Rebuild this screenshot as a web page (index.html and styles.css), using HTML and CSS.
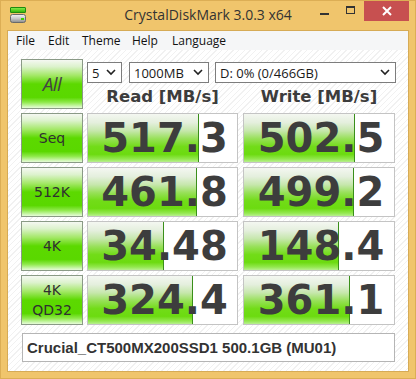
FILE: index.html
```html
<!DOCTYPE html>
<html>
<head>
<meta charset="utf-8">
<link rel="stylesheet" href="styles.css">
</head>
<body>
<div class="window">
  <div class="titlebar">
    <div class="tb-left">
      <svg class="app-icon" width="16" height="16" viewBox="0 0 16 16">
        <defs>
          <linearGradient id="g1" x1="0" y1="0" x2="0" y2="1">
            <stop offset="0" stop-color="#8cf050"/>
            <stop offset="1" stop-color="#2fb000"/>
          </linearGradient>
          <linearGradient id="g2" x1="0" y1="0" x2="0" y2="1">
            <stop offset="0" stop-color="#f4f4f4"/>
            <stop offset="0.5" stop-color="#c8c8c8"/>
            <stop offset="1" stop-color="#8a8a8a"/>
          </linearGradient>
        </defs>
        <rect x="0.5" y="0.5" width="15" height="5" rx="0.5" fill="url(#g1)" stroke="#1f8a10"/>
        <rect x="0.5" y="7.5" width="15" height="8" rx="2" fill="url(#g2)" stroke="#6a6a6a"/>
        <rect x="11" y="11" width="3" height="2" fill="#40d000"/>
      </svg>
    </div>
    <div class="title">CrystalDiskMark 3.0.3 x64</div>
    <div class="tb-right">
      <div class="cb cb-min"><span class="glyph-min"></span></div>
      <div class="cb cb-max"><span class="glyph-max"></span></div>
      <div class="cb cb-close">
        <svg width="10" height="10" viewBox="0 0 10 10"><path d="M1 1 L9 9 M9 1 L1 9" stroke="#fff" stroke-width="2"/></svg>
      </div>
    </div>
  </div>
  <div class="client">
    <div class="menubar">
      <span class="mi mi-file">File</span>
      <span class="mi mi-edit">Edit</span>
      <span class="mi mi-theme">Theme</span>
      <span class="mi mi-help">Help</span>
      <span class="mi mi-lang">Language</span>
    </div>
    <div class="content">
      <div class="toprow">
        <div class="btn btn-all">All</div>
        <div class="controls">
          <div class="combos">
            <div class="combo combo-count"><span>5</span><svg class="chev" width="10" height="7" viewBox="0 0 10 7"><path d="M1 1 L5 5 L9 1" fill="none" stroke="#222" stroke-width="1.6"/></svg></div>
            <div class="combo combo-size"><span>1000MB</span><svg class="chev" width="10" height="7" viewBox="0 0 10 7"><path d="M1 1 L5 5 L9 1" fill="none" stroke="#222" stroke-width="1.6"/></svg></div>
            <div class="combo combo-drive"><span>D: 0% (0/466GB)</span><svg class="chev" width="10" height="7" viewBox="0 0 10 7"><path d="M1 1 L5 5 L9 1" fill="none" stroke="#222" stroke-width="1.6"/></svg></div>
          </div>
          <div class="heads">
            <div class="head head-read">Read [MB/s]</div>
            <div class="head head-write">Write [MB/s]</div>
          </div>
        </div>
      </div>

      <div class="row">
        <div class="btn btn-seq">Seq</div>
        <div class="box box-read"><div class="bar" style="width:110px"></div><span class="val">517.3</span></div>
        <div class="box box-write"><div class="bar" style="width:110px"></div><span class="val">502.5</span></div>
      </div>
      <div class="row">
        <div class="btn btn-small">512K</div>
        <div class="box box-read"><div class="bar" style="width:108px"></div><span class="val">461.8</span></div>
        <div class="box box-write"><div class="bar" style="width:109px"></div><span class="val">499.2</span></div>
      </div>
      <div class="row">
        <div class="btn btn-small">4K</div>
        <div class="box box-read"><div class="bar" style="width:75px"></div><span class="val">34.48</span></div>
        <div class="box box-write"><div class="bar" style="width:94px"></div><span class="val">148.4</span></div>
      </div>
      <div class="row">
        <div class="btn btn-small btn-two">4K<br>QD32</div>
        <div class="box box-read"><div class="bar" style="width:104px"></div><span class="val">324.4</span></div>
        <div class="box box-write"><div class="bar" style="width:105px"></div><span class="val">361.1</span></div>
      </div>

      <div class="drive">Crucial_CT500MX200SSD1 500.1GB (MU01)</div>
    </div>
  </div>
</div>
</body>
</html>
```

FILE: styles.css
```css
html, body {
  margin: 0;
  padding: 0;
  background: #f0c56c;
}

.window {
  width: 416px;
  height: 379px;
  box-sizing: border-box;
  background: #f0c56c;
  border: 1px solid #dcae55;
  display: flex;
  flex-direction: column;
  overflow: hidden;
}

/* ---------- title bar ---------- */
.titlebar {
  height: 29px;
  flex: none;
  display: grid;
  grid-template-columns: 1fr auto 1fr;
  align-items: start;
}

.tb-left {
  padding: 6px 0 0 9px;
}

.app-icon {
  display: block;
}

.title {
  font-family: "Open Sans", "Noto Sans", sans-serif;
  font-size: 14px;
  line-height: 18px;
  padding-top: 5px;
  color: #333;
  white-space: nowrap;
}

.tb-right {
  justify-self: end;
  display: flex;
  margin-right: 6px;
}

.cb {
  height: 21px;
  margin-top: -1px;
  display: flex;
  align-items: center;
  justify-content: center;
}

.cb-min { width: 26px; }
.cb-max { width: 27px; }
.cb-close {
  width: 45px;
  background: #c75050;
}

.glyph-min {
  display: block;
  width: 9px;
  height: 2px;
  background: #333;
  margin-top: 6px;
}

.glyph-max {
  display: block;
  width: 7px;
  height: 5px;
  border: 1px solid #333;
  border-top-width: 2px;
  margin-top: -2px;
}

/* ---------- client ---------- */
.client {
  flex: 1;
  margin: 0 6px 6px 6px;
  border: 1px solid #d6ab56;
  display: flex;
  flex-direction: column;
  background: #fff;
}

.menubar {
  height: 19px;
  flex: none;
  background: #f5f6f7;
  display: flex;
  align-items: center;
  padding-left: 8px;
  font-family: "Open Sans", "Noto Sans", sans-serif;
  font-size: 12px;
  color: #111;
}

.mi { display: block; line-height: 19px; }
.mi-file { width: 32px; }
.mi-edit { width: 34px; }
.mi-theme { width: 50px; }
.mi-help { width: 40px; }

.content {
  flex: 1;
  padding: 9px 0 0 13px;
  background:
    repeating-linear-gradient(135deg, #ffffff 0 3px, #f1f1f1 3px 4px);
}

.toprow {
  display: flex;
  height: 50px;
}

.btn {
  width: 62px;
  height: 50px;
  box-sizing: border-box;
  border: 1px solid #8a9a86;
  background: linear-gradient(to bottom,
    #f5f8f2 0%,
    #dcf2cc 14%,
    #a4e868 32%,
    #5cd900 50%,
    #5ad800 78%,
    #8ee94a 88%,
    #d2f8b8 97%,
    #e6fbd8 100%);
  display: flex;
  align-items: center;
  justify-content: center;
  text-align: center;
  color: #303030;
  font-family: "DejaVu Sans", sans-serif;
  flex: none;
}

.btn-all {
  font-family: "Open Sans", "Noto Sans", sans-serif;
  font-size: 19px;
  font-style: italic;
  letter-spacing: -0.5px;
  color: #444;
}

.btn-seq {
  font-size: 14px;
}

.btn-small {
  font-size: 14px;
}

.btn-two {
  line-height: 20px;
}

.controls {
  margin-left: 4px;
  display: flex;
  flex-direction: column;
}

.combos {
  display: flex;
  margin-top: 3px;
  height: 21px;
}

.combo {
  box-sizing: border-box;
  height: 21px;
  border: 1px solid #7d7d7d;
  background: #fff;
  display: flex;
  align-items: center;
  justify-content: space-between;
  padding: 0 5px 0 4px;
  font-family: "Open Sans", "Noto Sans", sans-serif;
  font-size: 13px;
  color: #1a1a1a;
}

.combo-count { width: 35px; }
.combo-size { width: 80px; margin-left: 7px; }
.combo-drive { width: 181px; margin-left: 6px; }

.chev { display: block; }

.heads {
  display: flex;
  height: 26px;
}

.head {
  font-family: "DejaVu Sans", sans-serif;
  font-weight: bold;
  font-size: 16.5px;
  color: #3c3c3c;
  text-align: center;
  line-height: 26px;
  padding-top: 1px;
}

.head-read { width: 151px; }
.head-write { width: 152px; margin-left: 5px; }

.row {
  display: flex;
  height: 50px;
  margin-top: 4px;
}

.box {
  position: relative;
  box-sizing: border-box;
  height: 50px;
  border: 1px solid #c4c4c4;
  background: #fff;
  display: flex;
  align-items: center;
  justify-content: center;
  padding-left: 4px;
}

.box-read { width: 151px; margin-left: 4px; }
.box-write { width: 152px; margin-left: 5px; }

.bar {
  position: absolute;
  left: 0;
  top: 0;
  bottom: 0;
  border-right: 1px solid #3a8f1a;
  background: linear-gradient(to bottom,
    #f4f7f1 0%,
    #e4efdd 18%,
    #c6e7ac 35%,
    #96e056 52%,
    #72dc18 68%,
    #6cdb10 84%,
    #94e850 94%,
    #b8f090 100%);
}

.val {
  position: relative;
  font-family: "DejaVu Sans", sans-serif;
  font-weight: bold;
  font-size: 40px;
  line-height: 48px;
  color: #3d3d3d;
}

.drive {
  width: 373px;
  height: 29px;
  box-sizing: border-box;
  margin: 8px 0 0 1px;
  border: 1px solid #b5b5b5;
  background: #fff;
  display: flex;
  align-items: center;
  padding-left: 4px;
  font-family: "Liberation Sans", Arial, sans-serif;
  font-weight: bold;
  font-size: 15px;
  color: #333;
}
```
